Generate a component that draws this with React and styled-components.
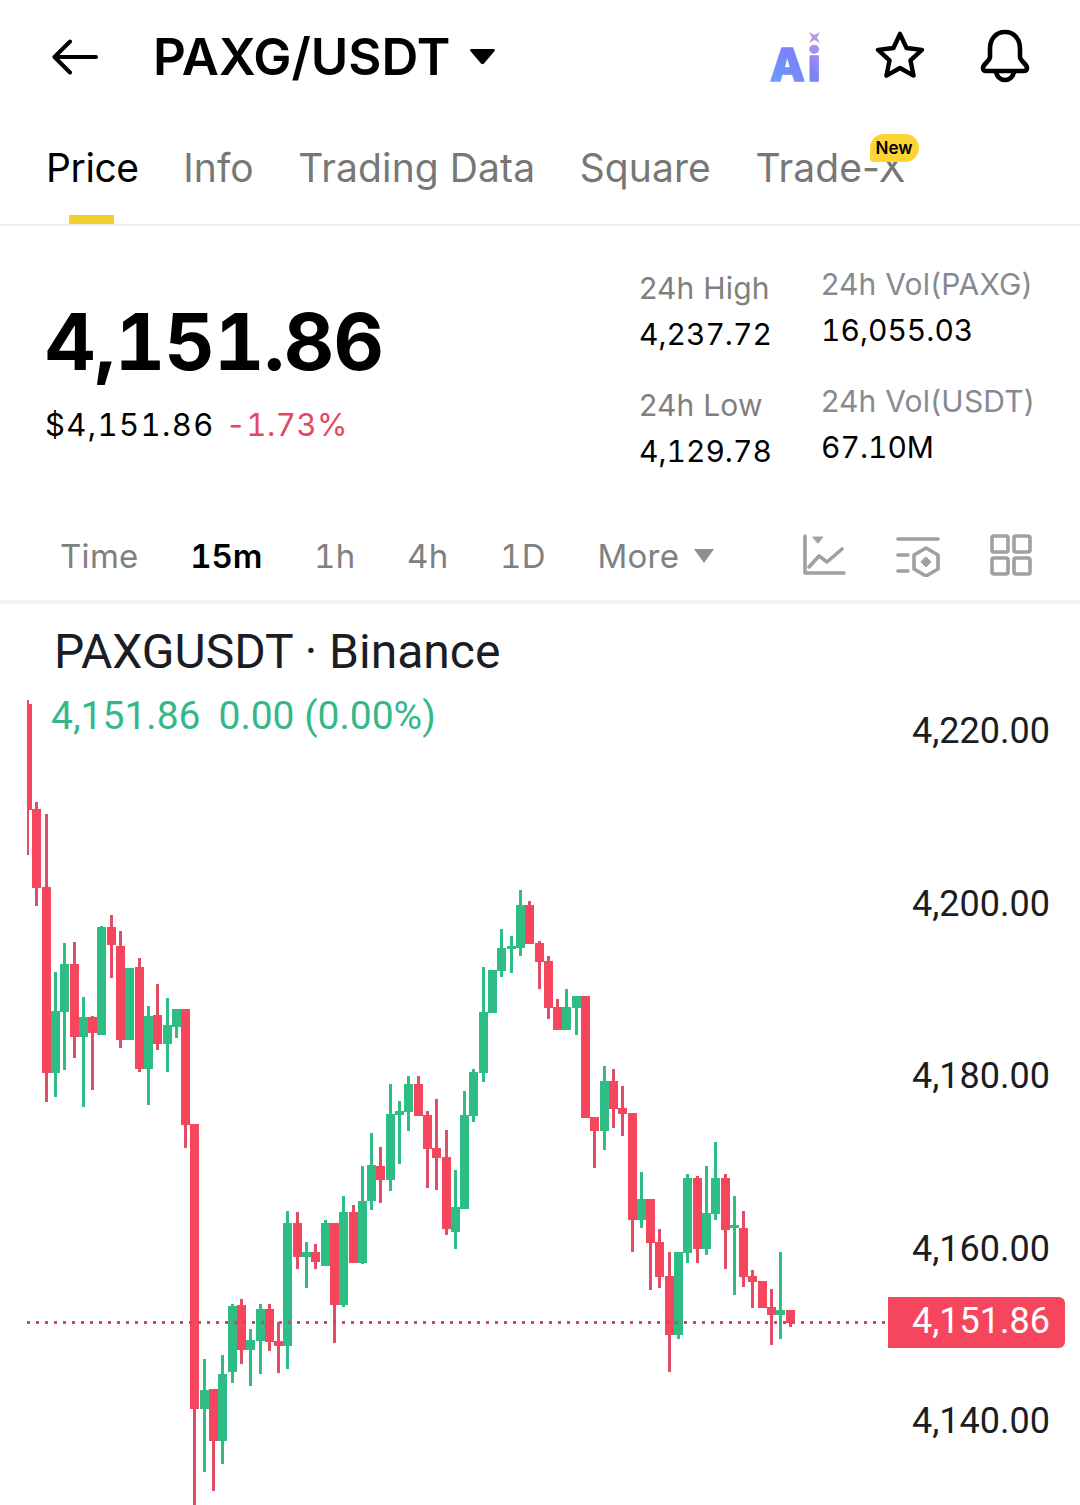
import React from "react";
import styled, {createGlobalStyle} from "styled-components";

const RED = '#F6465D'
const GREEN = '#2EBD85'

// type, wick top, body top, body bottom, wick bottom (page y)
const candles = [
    ['r', 700, 704, 810, 855], ['r', 802, 809, 888, 906], ['r', 814, 887, 1073, 1102], ['g', 972, 1011, 1073, 1097],
    ['g', 943, 964, 1012, 1070], ['r', 942, 964, 1037, 1058], ['g', 997, 1017, 1037, 1107], ['r', 1016, 1017, 1033, 1090],
    ['g', 926, 927, 1035, 1035], ['r', 915, 927, 945, 978], ['r', 931, 946, 1040, 1048], ['g', 968, 968, 1040, 1040],
    ['r', 958, 967, 1069, 1072], ['g', 1006, 1016, 1069, 1105], ['r', 984, 1015, 1044, 1050], ['g', 998, 1025, 1044, 1072],
    ['g', 1009, 1009, 1027, 1038], ['r', 1009, 1009, 1125, 1148], ['r', 1124, 1124, 1409, 1505], ['g', 1359, 1390, 1409, 1472],
    ['r', 1389, 1389, 1441, 1491], ['g', 1355, 1374, 1441, 1464], ['g', 1304, 1306, 1372, 1383], ['r', 1299, 1305, 1350, 1364],
    ['g', 1329, 1340, 1350, 1386], ['g', 1304, 1309, 1341, 1374], ['r', 1304, 1309, 1342, 1351], ['r', 1322, 1341, 1346, 1373],
    ['g', 1211, 1223, 1346, 1369], ['r', 1212, 1223, 1257, 1269], ['g', 1242, 1252, 1257, 1288], ['r', 1244, 1252, 1262, 1269],
    ['g', 1220, 1223, 1266, 1266], ['r', 1223, 1223, 1305, 1343], ['g', 1196, 1212, 1305, 1307], ['r', 1205, 1212, 1263, 1263],
    ['g', 1166, 1201, 1263, 1264], ['g', 1133, 1165, 1201, 1210], ['r', 1147, 1166, 1180, 1203], ['g', 1084, 1114, 1180, 1191],
    ['g', 1101, 1111, 1115, 1164], ['g', 1076, 1084, 1112, 1131], ['r', 1076, 1084, 1116, 1116], ['r', 1111, 1115, 1149, 1188],
    ['r', 1099, 1148, 1158, 1190], ['r', 1130, 1157, 1229, 1235], ['g', 1170, 1207, 1232, 1249], ['g', 1091, 1115, 1209, 1209],
    ['g', 1069, 1072, 1116, 1122], ['g', 967, 1012, 1073, 1082], ['g', 970, 970, 1013, 1013], ['g', 929, 948, 971, 977],
    ['g', 936, 946, 949, 973], ['g', 890, 905, 948, 956], ['r', 901, 905, 944, 944], ['r', 941, 943, 962, 989],
    ['r', 956, 961, 1008, 1019], ['r', 999, 1007, 1030, 1030], ['g', 989, 1007, 1030, 1030], ['g', 996, 996, 1008, 1035],
    ['r', 996, 996, 1118, 1118], ['r', 1117, 1117, 1131, 1168], ['g', 1066, 1081, 1131, 1150], ['r', 1069, 1081, 1109, 1128],
    ['r', 1086, 1108, 1114, 1136], ['r', 1113, 1113, 1220, 1252], ['g', 1172, 1199, 1220, 1228], ['r', 1199, 1199, 1243, 1290],
    ['r', 1229, 1242, 1277, 1288], ['r', 1252, 1276, 1335, 1372], ['g', 1252, 1252, 1335, 1339], ['g', 1174, 1178, 1253, 1263],
    ['r', 1176, 1178, 1249, 1263], ['g', 1166, 1213, 1249, 1255], ['g', 1142, 1178, 1214, 1220], ['r', 1174, 1178, 1230, 1269],
    ['g', 1196, 1225, 1228, 1295], ['r', 1211, 1228, 1277, 1287], ['r', 1270, 1276, 1282, 1308], ['r', 1281, 1281, 1308, 1308],
    ['r', 1289, 1307, 1315, 1345], ['g', 1252, 1310, 1315, 1339], ['r', 1310, 1310, 1323, 1327],
]

const tabs = ['Price', 'Info', 'Trading Data', 'Square', 'Trade-X']
const intervals = ['Time', '15m', '1h', '4h', '1D']
const axisPrices = ['4,220.00', '4,200.00', '4,180.00', '4,160.00', '4,140.00']

const GlobalStyle = createGlobalStyle`
  html, body {
    margin: 0;
    padding: 0;
    background: #fff;
    font-family: 'Inter', 'Liberation Sans', sans-serif;
    overflow: hidden;
  }
`

const Page = styled.div`
  width: 1080px;
  height: 1505px;
  overflow: hidden;
  background: #fff;
`

const Header = styled.header`
  height: 112px;
  box-sizing: border-box;
  padding: 2px 50px 0 52px;
  display: flex;
  align-items: center;
`

const Pair = styled.h1`
  margin: 0 0 0 55px;
  font-size: 51px;
  font-weight: 600;
  line-height: 60px;
  letter-spacing: 0;
  color: #000;
`

const PairCaret = styled.svg`
  margin: -2px 0 0 19px;
  width: 27px;
  height: 17px;
`

const HeaderActions = styled.div`
  margin: -2px 0 0 auto;
  display: flex;
  align-items: center;
  gap: 49px;
`

const StarSlot = styled.span`
  display: flex;
  margin-right: 5px;
`

const TabBar = styled.nav`
  height: 114px;
  box-sizing: border-box;
  padding: 0 0 0 46px;
  display: flex;
  align-items: flex-start;
  gap: 44.5px;
  border-bottom: 2px solid #eeeeee;
`

const Tab = styled.div`
  position: relative;
  height: 112px;
  padding-top: 34px;
  box-sizing: border-box;
  font-size: 39px;
  line-height: 44px;
  letter-spacing: ${p => p.$active ? '-0.4px' : '0.1px'};
  color: ${p => p.$active ? '#000' : '#777777'};
`

const TabMark = styled.span`
  position: absolute;
  left: 23px;
  bottom: 0;
  width: 45px;
  height: 9px;
  background: #F0D02F;
`

const NewBadge = styled.span`
  position: absolute;
  top: 22px;
  right: -13px;
  width: 49px;
  height: 28px;
  border-radius: 14px 14px 14px 4px;
  background: #FCD535;
  color: #000;
  font-size: 17px;
  font-weight: 600;
  line-height: 28px;
  text-align: center;
  letter-spacing: 0;
`

const Stats = styled.section`
  height: 300px;
  box-sizing: border-box;
  padding: 0 0 0 45px;
  display: flex;
`

const PriceBlock = styled.div`
  padding-top: 71px;
  width: 594px;
`

const BigPrice = styled.div`
  font-size: 78px;
  font-weight: 700;
  line-height: 90px;
  letter-spacing: -0.8px;
  font-variant-numeric: tabular-nums;
  color: #000;
`

const SubPrice = styled.div`
  margin-top: 18px;
  display: flex;
  gap: 11px;
  font-size: 31px;
  line-height: 40px;
  letter-spacing: 1.4px;
  font-variant-numeric: tabular-nums;
  color: #000;
`

const Change = styled.span`
  color: #E5475F;
  letter-spacing: 0.5px;
`

const StatColumn = styled.div`
  padding-top: ${p => p.$top}px;
  width: ${p => p.$width}px;
  display: flex;
  flex-direction: column;
  gap: 25px;
`

const Stat = styled.div`
  display: flex;
  flex-direction: column;
`

const StatLabel = styled.span`
  font-size: 30px;
  line-height: 46px;
  letter-spacing: 0.2px;
  color: ${p => p.$cool ? '#858A92' : '#808080'};
  white-space: nowrap;
`

const StatValue = styled.span`
  font-size: 30px;
  line-height: 46px;
  letter-spacing: 0;
  font-variant-numeric: tabular-nums;
  color: #000;
  white-space: nowrap;
`

const IntervalBar = styled.div`
  height: 78px;
  box-sizing: border-box;
  padding: 0 47px 14px 60px;
  display: flex;
  align-items: center;
  gap: 51.5px;
  border-bottom: 4px solid #f5f5f5;
`

const Interval = styled.span`
  font-size: 33px;
  font-weight: ${p => p.$active ? 600 : 400};
  line-height: 44px;
  letter-spacing: ${p => p.$active ? 0 : '0.3px'};
  font-variant-numeric: tabular-nums;
  color: ${p => p.$active ? '#000' : '#808080'};
  white-space: nowrap;
`

const MoreCaret = styled.svg`
  margin-left: -36.5px;
  width: 20px;
  height: 14px;
`

const ToolIcons = styled.div`
  margin: -2px 0 0 auto;
  display: flex;
  gap: 49.5px;
`

const ChartPanel = styled.section`
  height: 901px;
  display: grid;
  overflow: hidden;
`

const ChartCanvas = styled.svg`
  grid-area: 1 / 1;
  width: 1080px;
  height: 901px;
  display: block;
`

const ChartLegend = styled.div`
  grid-area: 1 / 1;
  padding: 20px 0 0 54px;
  font-family: 'Roboto', sans-serif;
`

const ChartTitle = styled.div`
  font-size: 48px;
  line-height: 56px;
  color: #1A1D24;
`

const ChartValues = styled.div`
  margin: 12px 0 0 -3px;
  display: flex;
  gap: 18px;
  font-size: 39px;
  line-height: 48px;
  color: #35B78A;
`

const PriceAxis = styled.div`
  grid-area: 1 / 1;
  position: relative;
  justify-self: end;
  padding: 107px 30px 0 0;
  display: flex;
  flex-direction: column;
  align-items: flex-end;
  gap: 132.5px;
  font-family: 'Roboto', sans-serif;
`

const AxisLabel = styled.span`
  font-size: 36px;
  line-height: 40px;
  color: #1A1D24;
`

const LastPrice = styled.span`
  position: absolute;
  top: 693px;
  right: 15px;
  width: 177px;
  height: 51px;
  box-sizing: border-box;
  padding-right: 15px;
  border-radius: 0 6px 6px 0;
  background: ${RED};
  color: #fff;
  font-size: 36px;
  line-height: 49px;
  text-align: right;
`

const LogoMark = styled.svg`
  overflow: visible;
`

const BackArrow = () => (
    <svg width="46" height="36" viewBox="0 0 46 36" fill="none" stroke="#000" strokeWidth="4" strokeLinecap="round" strokeLinejoin="round">
        <path d="M44 18H3M18 2.5L2.5 18L18 33.5" />
    </svg>
)

const AiLogo = () => (
    <LogoMark width="56" height="54" viewBox="0 0 56 54">
        <defs>
            <linearGradient id="aiFill" x1="0" y1="1" x2="1" y2="0">
                <stop offset="0" stopColor="#5FA8FF" />
                <stop offset="0.55" stopColor="#7C80F5" />
                <stop offset="1" stopColor="#C49AF0" />
            </linearGradient>
        </defs>
        <text
            x="1"
            y="52"
            fontFamily="Inter, sans-serif"
            fontSize="45"
            fontWeight="800"
            letterSpacing="3"
            fill="url(#aiFill)"
            stroke="url(#aiFill)"
            strokeWidth="1.6"
            strokeLinejoin="round"
        >Ai</text>
        <path d="M40 3L45.5 6L51 3L48 8.5L51 14L45.5 11L40 14L43 8.5Z" fill="#B69AE0" />
    </LogoMark>
)

const StarIcon = () => (
    <svg width="52" height="50" viewBox="0 0 52 52" fill="none" stroke="#000" strokeWidth="4.6" strokeLinejoin="round">
        <path d="M26 3L32.8 17.7L48.8 19.6L36.9 30.6L40.1 46.4L26 38.5L11.9 46.4L15.1 30.6L3.2 19.6L19.2 17.7Z" />
    </svg>
)

const BellIcon = () => (
    <svg width="50" height="54" viewBox="0 0 50 54" fill="none" stroke="#000" strokeWidth="4.6" strokeLinecap="round" strokeLinejoin="round">
        <path d="M25 3C15 3 10 11 10 20V28C10 32 3 35 3 39C3 41 4.5 42 6.5 42H43.5C45.5 42 47 41 47 39C47 35 40 32 40 28V20C40 11 35 3 25 3Z" />
        <path d="M16 43C17 48 21 51 25 51C29 51 33 48 34 43" />
    </svg>
)

const ToolIcon = ({children}) => (
    <svg width="44" height="44" viewBox="0 0 44 44" fill="none" stroke="#A0A0A0" strokeWidth="3.6" strokeLinecap="round" strokeLinejoin="round">
        {children}
    </svg>
)

const Candle = ({x, type, wickTop, top, bottom, wickBottom}) => {
    const color = type === 'r' ? RED : GREEN
    return (
        <g fill={color}>
            <rect x={x - 1.5} y={wickTop} width="3" height={wickBottom - wickTop} fill={type === 'r' ? '#E14C66' : color} />
            <rect x={x - 4.5} y={top} width="9" height={Math.max(bottom - top, 1)} />
        </g>
    )
}

export default function App() {
    return (
        <Page>
            <GlobalStyle />
            <Header>
                <BackArrow />
                <Pair>PAXG/USDT</Pair>
                <PairCaret viewBox="0 0 27 17">
                    <path d="M1 2.5C1 1.5 1.6 1 2.5 1H24.5C25.6 1 26.2 2 25.6 3L15 15.5C14.2 16.4 12.8 16.4 12 15.5L1.4 3C1.2 2.8 1 2.7 1 2.5Z" fill="#000" />
                </PairCaret>
                <HeaderActions>
                    <AiLogo />
                    <StarSlot><StarIcon /></StarSlot>
                    <BellIcon />
                </HeaderActions>
            </Header>

            <TabBar>
                {tabs.map((tab, i) => (
                    <Tab key={tab} $active={i === 0}>
                        {tab}
                        {i === 0 && <TabMark />}
                        {tab === 'Trade-X' && <NewBadge>New</NewBadge>}
                    </Tab>
                ))}
            </TabBar>

            <Stats>
                <PriceBlock>
                    <BigPrice>4,151.86</BigPrice>
                    <SubPrice>
                        <span>$4,151.86</span>
                        <Change>-1.73%</Change>
                    </SubPrice>
                </PriceBlock>
                <StatColumn $top={39} $width={182}>
                    <Stat>
                        <StatLabel>24h High</StatLabel>
                        <StatValue>4,237.72</StatValue>
                    </Stat>
                    <Stat>
                        <StatLabel>24h Low</StatLabel>
                        <StatValue>4,129.78</StatValue>
                    </Stat>
                </StatColumn>
                <StatColumn $top={35} $width={240}>
                    <Stat>
                        <StatLabel $cool>24h Vol(PAXG)</StatLabel>
                        <StatValue>16,055.03</StatValue>
                    </Stat>
                    <Stat>
                        <StatLabel $cool>24h Vol(USDT)</StatLabel>
                        <StatValue>67.10M</StatValue>
                    </Stat>
                </StatColumn>
            </Stats>

            <IntervalBar>
                {intervals.map((item, i) => (
                    <Interval key={item} $active={i === 1}>{item}</Interval>
                ))}
                <Interval>More</Interval>
                <MoreCaret viewBox="0 0 20 14">
                    <path d="M0 0H20L10 14Z" fill="#909090" />
                </MoreCaret>
                <ToolIcons>
                    <ToolIcon>
                        <path d="M3 3V40H42" />
                        <path d="M11 4H21L16 10Z" fill="#A0A0A0" strokeWidth="1" />
                        <path d="M7 34L17 23L25 29L40 16" />
                    </ToolIcon>
                    <ToolIcon>
                        <path d="M2 6H42M2 22H12M2 38H12" />
                        <path d="M30 15L42 22V36L30 43L18 36V22Z" />
                        <path d="M30 24L35 29L30 34L25 29Z" fill="#A0A0A0" strokeWidth="1" />
                    </ToolIcon>
                    <ToolIcon>
                        <rect x="3" y="3" width="16" height="16" rx="2" />
                        <rect x="25" y="3" width="16" height="16" rx="2" />
                        <rect x="3" y="25" width="16" height="16" rx="2" />
                        <rect x="25" y="25" width="16" height="16" rx="2" />
                    </ToolIcon>
                </ToolIcons>
            </IntervalBar>

            <ChartPanel>
                <ChartCanvas viewBox="0 604 1080 901">
                    <defs>
                        <clipPath id="plotArea">
                            <rect x="27" y="604" width="861" height="901" />
                        </clipPath>
                    </defs>
                    <g clipPath="url(#plotArea)">
                        {candles.map(([type, wickTop, top, bottom, wickBottom], i) => (
                            <Candle
                                key={i}
                                x={Math.round(27.5 + 9.3 * i - 0.5) + 0.5}
                                type={type}
                                wickTop={wickTop}
                                top={top}
                                bottom={bottom}
                                wickBottom={wickBottom}
                            />
                        ))}
                        <line x1="27" y1="1322.5" x2="888" y2="1322.5" stroke="#C94A68" strokeWidth="3" strokeDasharray="3 6" />
                    </g>
                </ChartCanvas>
                <ChartLegend>
                    <ChartTitle>PAXGUSDT · Binance</ChartTitle>
                    <ChartValues>
                        <span>4,151.86</span>
                        <span>0.00 (0.00%)</span>
                    </ChartValues>
                </ChartLegend>
                <PriceAxis>
                    {axisPrices.map(price => (
                        <AxisLabel key={price}>{price}</AxisLabel>
                    ))}
                    <LastPrice>4,151.86</LastPrice>
                </PriceAxis>
            </ChartPanel>
        </Page>
    )
}
